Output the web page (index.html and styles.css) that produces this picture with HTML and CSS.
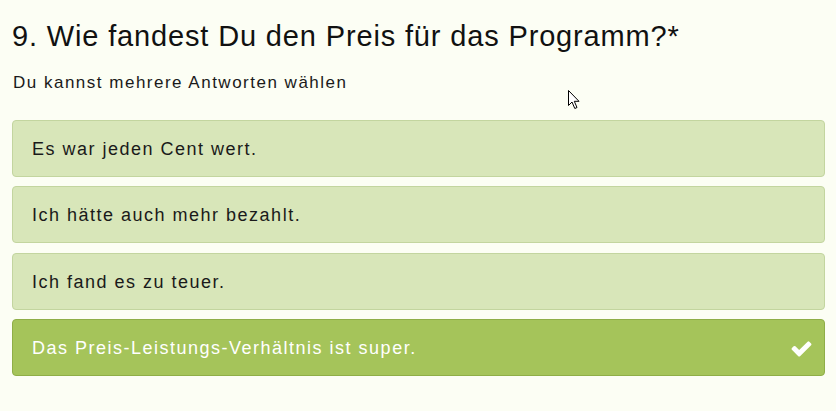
FILE: index.html
```html
<!DOCTYPE html>
<html lang="de">
<head>
<meta charset="utf-8">
<title>Frage 9</title>
<link rel="stylesheet" href="styles.css">
</head>
<body>
<main class="question">
  <h1 class="question-title">9. Wie fandest Du den Preis für das Programm?*</h1>
  <p class="question-hint">Du kannst mehrere Antworten wählen</p>
  <ul class="options">
    <li class="option">Es war jeden Cent wert.</li>
    <li class="option">Ich hätte auch mehr bezahlt.</li>
    <li class="option">Ich fand es zu teuer.</li>
    <li class="option option-selected">
      <span>Das Preis-Leistungs-Verhältnis ist super.</span>
      <svg class="check" viewBox="0 0 1792 1792" aria-hidden="true"><path d="M1671 566q0 40-28 68l-724 724-136 136q-28 28-68 28t-68-28l-136-136-362-362q-28-28-28-68t28-68l136-136q28-28 68-28t68 28l294 295 656-657q28-28 68-28t68 28l136 136q28 28 28 68z"/></svg>
    </li>
  </ul>
  <svg class="cursor" viewBox="0 0 13 20" aria-hidden="true"><path d="M0.5 0.5 L0.5 15.5 L4 12 L6.8 18.5 L9 17.5 L6.3 11.3 L11 11.3 Z" fill="#fff" stroke="#000" stroke-width="1" stroke-linejoin="miter"/></svg>
</main>
</body>
</html>
```

FILE: styles.css
```css
html, body {
  margin: 0;
  padding: 0;
  background: #fcfef4;
}

body {
  font-family: "Liberation Sans", Arial, sans-serif;
  color: #111;
}

.question {
  position: relative;
  padding: 18px 11px 0 12px;
}

.question-title {
  margin: 0;
  font-size: 29px;
  font-weight: normal;
  line-height: 36px;
  letter-spacing: 0.85px;
  color: #111;
}

.question-hint {
  margin: 18px 0 0 1px;
  font-size: 17px;
  line-height: 22px;
  letter-spacing: 1.5px;
  color: #1a1a1a;
}

.options {
  list-style: none;
  margin: 26px 0 0 0;
  padding: 0;
  display: flex;
  flex-direction: column;
  gap: 9.3px;
}

.option {
  box-sizing: border-box;
  height: 57px;
  display: flex;
  align-items: center;
  justify-content: space-between;
  padding: 2px 20px 0 19px;
  background: #d8e6b9;
  border: 1px solid #c3d59f;
  border-radius: 4px;
  font-size: 18px;
  letter-spacing: 1.5px;
  color: #1a1a1a;
}

.option-selected {
  background: #a5c45a;
  border-color: #8fae47;
  color: #fff;
}

.check {
  width: 23px;
  height: 23px;
  fill: #fff;
  margin-right: -9px;
}

.cursor {
  position: absolute;
  left: 568px;
  top: 90px;
  width: 13px;
  height: 20px;
}
```
